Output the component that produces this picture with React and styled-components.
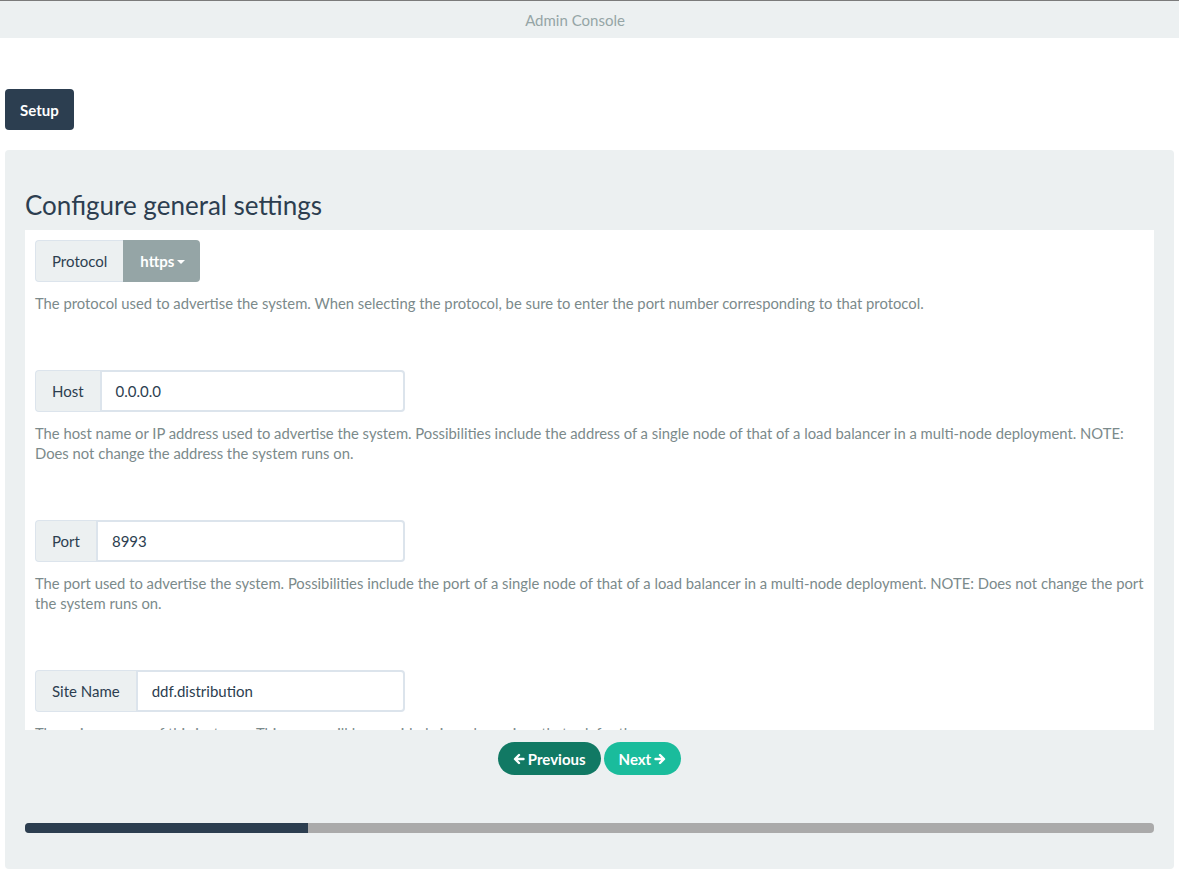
import React from "react";
import styled, { createGlobalStyle } from "styled-components";

const Global = createGlobalStyle`
  html, body { margin: 0; padding: 0; background: #ffffff; }
  body { font-family: Lato, "Open Sans", sans-serif; color: #2c3e50; }
  * { box-sizing: border-box; }
`;

const TopBar = styled.div`
  height: 38px;
  background: #ecf0f1;
  border-top: 1px solid #7b7b7b;
  display: flex;
  align-items: center;
  justify-content: center;
  padding-right: 29px;
  color: #95a5a6;
  font-size: 15px;
`;

const Page = styled.div`
  padding: 51px 5px 7px 5px;
  display: flex;
  flex-direction: column;
  align-items: flex-start;
  gap: 20px;
`;

const SetupButton = styled.div`
  height: 41px;
  padding: 0 15px;
  background: #2c3e50;
  color: #fff;
  font-weight: 700;
  font-size: 15px;
  border-radius: 4px;
  display: flex;
  align-items: center;
`;

const Panel = styled.div`
  align-self: stretch;
  background: #ecf0f1;
  border-radius: 4px;
  padding: 38px 20px 36px 20px;
  display: flex;
  flex-direction: column;
  height: 719px;
`;

const Heading = styled.h2`
  margin: 0 0 8px 0;
  font-size: 26px;
  font-weight: 400;
  line-height: 34px;
  color: #2c3e50;
`;

const ScrollArea = styled.div`
  background: #fff;
  height: 500px;
  overflow: hidden;
  padding: 10px 10px 0 10px;
`;

const Field = styled.div`
  margin-bottom: 57px;
`;

const Group = styled.div`
  display: flex;
  height: 42px;
  width: ${(p) => p.$width || "370px"};
`;

const Addon = styled.div`
  background: #ecf0f1;
  border: 1px solid #dce4ec;
  border-right: none;
  border-radius: 4px 0 0 4px;
  padding: 0 16px;
  display: flex;
  align-items: center;
  font-size: 15px;
  color: #2c3e50;
`;

const Input = styled.div`
  flex: 1;
  border: 2px solid #dce4ec;
  border-radius: 0 4px 4px 0;
  display: flex;
  align-items: center;
  padding: 0 14px;
  font-size: 15px;
  color: #2c3e50;
`;

const Dropdown = styled.div`
  background: #95a5a6;
  color: #fff;
  font-weight: 700;
  font-size: 15px;
  border-radius: 0 4px 4px 0;
  padding: 0 15px 0 17px;
  display: flex;
  align-items: center;
  gap: 3px;
`;

const Caret = styled.span`
  display: inline-block;
  width: 0;
  height: 0;
  border-left: 4px solid transparent;
  border-right: 4px solid transparent;
  border-top: 4px solid #fff;
  margin-top: 2px;
`;

const Help = styled.p`
  margin: 11px 0 0 0;
  font-size: 14.8px;
  line-height: 20px;
  color: #7b8a8b;
`;

const Nav = styled.div`
  display: flex;
  justify-content: center;
  gap: 3px;
  margin-top: 12px;
`;

const NavButton = styled.div`
  height: 33px;
  border-radius: 17px;
  padding: 0 15px;
  display: flex;
  align-items: center;
  gap: 3px;
  color: #fff;
  font-weight: 700;
  font-size: 15px;
  background: ${(p) => (p.$primary ? "#1abc9c" : "#117964")};
`;

const Progress = styled.div`
  margin-top: 48px;
  height: 10px;
  background: #aaaaaa;
  border-radius: 4px;
  overflow: hidden;
  display: flex;
`;

const ProgressFill = styled.div`
  background: #2c3e50;
  height: 100%;
`;

const Arrow = ({ dir }) => (
  <svg width="12" height="12" viewBox="0 0 12 12" style={{ transform: dir === "left" ? "none" : "scaleX(-1)" }}>
    <path d="M10.5 6H2.5M6 2L2 6l4 4" stroke="#fff" strokeWidth="2.4" fill="none" strokeLinecap="round" strokeLinejoin="round" />
  </svg>
);

export default function App() {
  return (
    <>
      <Global />
      <TopBar>Admin Console</TopBar>
      <Page>
        <SetupButton>Setup</SetupButton>
        <Panel>
          <Heading>Configure general settings</Heading>
          <ScrollArea>
            <Field>
              <Group $width="auto">
                <Addon>Protocol</Addon>
                <Dropdown>
                  https <Caret />
                </Dropdown>
              </Group>
              <Help>
                The protocol used to advertise the system. When selecting the protocol, be sure to enter the port number corresponding to that protocol.
              </Help>
            </Field>
            <Field>
              <Group>
                <Addon>Host</Addon>
                <Input>0.0.0.0</Input>
              </Group>
              <Help>
                The host name or IP address used to advertise the system. Possibilities include the address of a single node of that of a load balancer in a multi-node deployment. NOTE: Does not change the address the system runs on.
              </Help>
            </Field>
            <Field>
              <Group>
                <Addon>Port</Addon>
                <Input>8993</Input>
              </Group>
              <Help>
                The port used to advertise the system. Possibilities include the port of a single node of that of a load balancer in a multi-node deployment. NOTE: Does not change the port the system runs on.
              </Help>
            </Field>
            <Field>
              <Group>
                <Addon>Site Name</Addon>
                <Input>ddf.distribution</Input>
              </Group>
              <Help>
                The unique name of this instance. This name will be provided via web services that ask for the name.
              </Help>
            </Field>
          </ScrollArea>
          <Nav>
            <NavButton>
              <Arrow dir="left" />
              Previous
            </NavButton>
            <NavButton $primary>
              Next
              <Arrow dir="right" />
            </NavButton>
          </Nav>
          <Progress>
            <ProgressFill style={{ width: `${(283 / 1130) * 100}%` }} />
          </Progress>
        </Panel>
      </Page>
    </>
  );
}
